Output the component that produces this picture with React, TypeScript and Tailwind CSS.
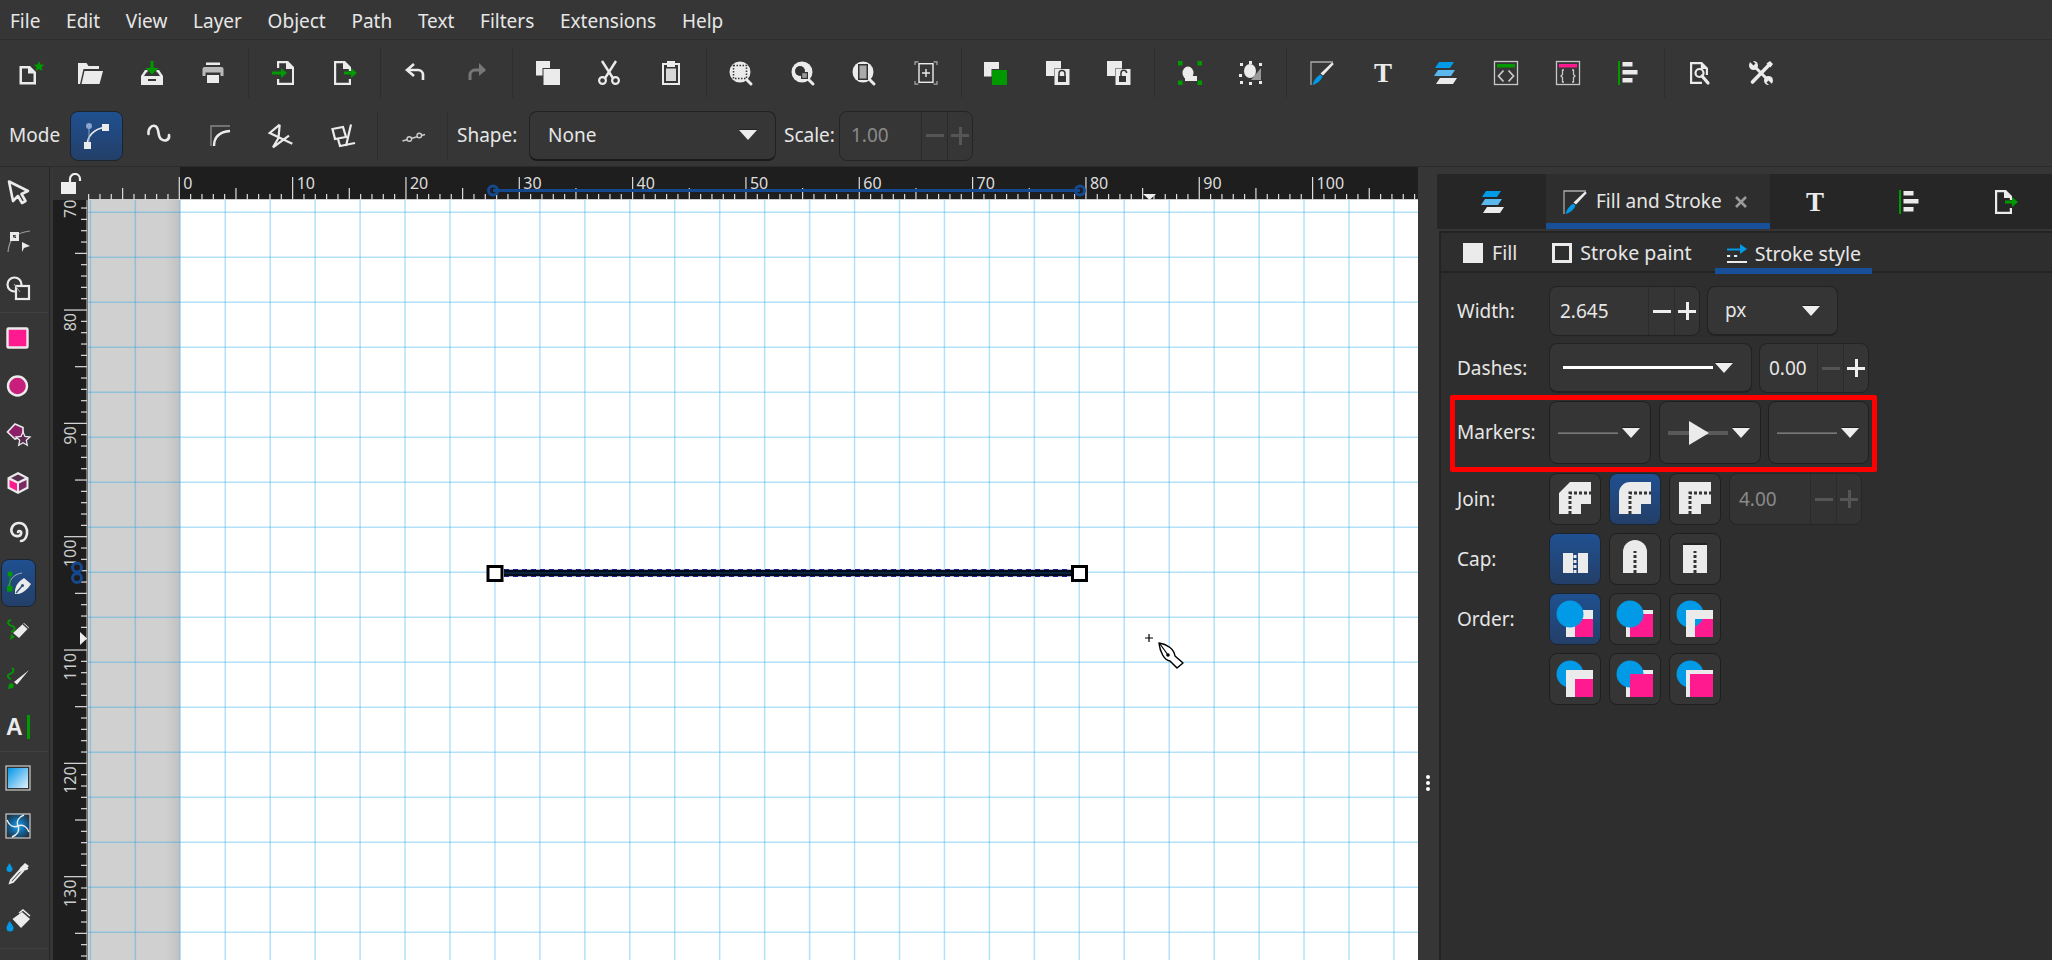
import type { ReactNode } from "react";

const G = "#ebebeb";
const GREEN = "#009a00";
const PINK = "#ff1a90";
const BLUE = "#009ae6";

function Ico({ children }: { children: ReactNode }) {
  return (
    <svg width="24" height="24" viewBox="0 0 24 24" className="overflow-visible shrink-0">
      {children}
    </svg>
  );
}

// Top toolbar icons
const iconNew = (
  <Ico>
    <path fill={G} fillRule="evenodd" d="M2.5 5h10.5l6 6v12.5H2.5zM5 7.5v13.5h11.5v-8.500h-5.500V7.500z" />
    <path fill={GREEN} d="M22 0l1.600 3.400 3.700.4-2.700 2.500.8 3.700-3.400-1.900-3.300 1.900.8-3.700-2.700-2.500 3.700-.4z" />
  </Ico>
);
const iconOpen = (
  <Ico>
    <path fill={G} d="M0 2h8.500l2 3H21v3H5.500L2 23H0z" />
    <path fill={G} d="M6.500 10H25l-3.500 13H3.500z" />
  </Ico>
);
const iconSave = (
  <Ico>
    <path fill={GREEN} d="M10.500 0h3v7h5l-6.500 6.500L5.500 7h5z" />
    <path fill={G} d="M1 24v-9l4-6h2.500v2.200H6.500L4 15h16l-2.500-3.800h-1V9H19l4 6v9zM8 18v2h8v-2z" fillRule="evenodd" />
  </Ico>
);
const iconPrint = (
  <Ico>
    <path fill={G} d="M5 1.500h14v2.500H5zM6 14h12v8H6z" />
    <path fill="#b9b9b9" d="M3.500 6h17A2 2 0 0 1 22.500 8v7h-3v-3.500h-15V15h-3V8a2 2 0 0 1 2-2z" />
  </Ico>
);
const iconImport = (
  <Ico>
    <path fill={G} fillRule="evenodd" d="M5 7V0h11l6 6v18H5v-6h2.200v3.800H20V8h-6V2.200H7.200V7z" />
    <path fill={GREEN} d="M0 10.500h9V7l6 5-6 5v-3.500H0z" />
  </Ico>
);
const iconExport = (
  <Ico>
    <path fill={G} fillRule="evenodd" d="M1 0h11l6 6v4h-2.200V8H10V2.200H3.200v19.600h12.600V18H18v6H1z" />
    <path fill={GREEN} d="M11 10.500h7V7l6 5-6 5v-3.500h-7z" />
  </Ico>
);
const iconUndo = (
  <Ico>
    <path d="M4 9h10a5 5 0 0 1 5 5v5" fill="none" stroke={G} strokeWidth="2.600" />
    <path d="M10 3L3 9l7 6" fill="none" stroke={G} strokeWidth="2.600" />
  </Ico>
);
const iconRedo = (
  <Ico>
    <path d="M20 9H10a5 5 0 0 0-5 5v5" fill="none" stroke="#777" strokeWidth="3" />
    <path d="M14 2l7 7-7 6z" fill="#777" />
  </Ico>
);
const iconDup = (
  <Ico>
    <path fill={G} d="M0 0h14v7H6.500v7.500H0z" />
    <path fill={G} d="M7.500 8H24v16H7.500z" />
  </Ico>
);
const iconCut = (
  <Ico>
    <path d="M5 0l11.500 18M19 0L7.500 18" fill="none" stroke={G} strokeWidth="2.400" />
    <circle cx="5.500" cy="19.500" r="3.400" fill="none" stroke={G} strokeWidth="2.200" />
    <circle cx="18.500" cy="19.500" r="3.400" fill="none" stroke={G} strokeWidth="2.200" />
  </Ico>
);
const iconPaste = (
  <Ico>
    <path fill={G} fillRule="evenodd" d="M3 2h5V0h8v2h5v22H3zM5 4v18h14V4h-3v2H8V4z" />
    <path fill="#d8d8d8" d="M7 7.500h10V20H7z" />
  </Ico>
);
function Magnifier({ children }: { children: ReactNode }) {
  return (
    <Ico>
      <path d="M17 18l5 5" stroke={G} strokeWidth="3" strokeLinecap="round" />
      <circle cx="11" cy="11" r="10.500" fill={G} />
      {children}
    </Ico>
  );
}
const iconZoomSel = (
  <Magnifier>
    <rect x="4.500" y="4.500" width="13" height="13" fill="none" stroke="#333" strokeWidth="1.500" strokeDasharray="1.500 1.500" />
  </Magnifier>
);
const iconZoomDraw = (
  <Magnifier>
    <circle cx="9" cy="10" r="5" fill="#333" />
    <rect x="10" y="11" width="7" height="7" fill="#333" />
    <rect x="11.200" y="12.200" width="4.600" height="4.600" fill="#999" />
  </Magnifier>
);
const iconZoomPage = (
  <Magnifier>
    <rect x="6" y="3" width="10" height="16" fill="#333" />
    <rect x="7.500" y="4.500" width="7" height="13" fill="#aaa" />
  </Magnifier>
);
const iconZoomCenter = (
  <Ico>
    <path d="M1 4V.8h3.500M23 4V.8h-3.500M1 20v3.200h3.500M23 20v3.200h-3.500" fill="none" stroke="#aaa" strokeWidth="1.200" />
    <rect x="5" y="2.700" width="14" height="18.600" fill="none" stroke={G} strokeWidth="1.400" />
    <path d="M12 8v8M8 12h8" stroke={G} strokeWidth="1.400" />
  </Ico>
);
const iconGroup = (
  <Ico>
    <path fill={G} d="M0 1h15v7H7.500v7.500H0z" />
    <rect x="8" y="9" width="15" height="15" fill={GREEN} />
  </Ico>
);
const iconLock = (
  <Ico>
    <path fill={G} d="M0 0h15v7.500H8V15H0z" />
    <rect x="8.500" y="8" width="15" height="16" fill={G} />
    <path d="M13 15v-2.500a3 3 0 0 1 6 0V15" fill="none" stroke="#333" strokeWidth="1.500" />
    <rect x="12" y="15" width="8" height="6" fill="#333" />
  </Ico>
);
const iconUnlock = (
  <Ico>
    <path fill={G} d="M0 0h15v7.500H8V15H0z" />
    <rect x="8.500" y="8" width="15" height="16" fill={G} />
    <path d="M14 15v-3a2.800 2.800 0 0 1 5.600 0" fill="none" stroke="#333" strokeWidth="1.500" />
    <rect x="12" y="15" width="7" height="6" fill="#333" />
  </Ico>
);
const iconSelGroup = (
  <Ico>
    <path fill={GREEN} d="M0 0h4.500v4.500H0zM19.500 0H24v4.500h-4.500zM0 19.500h4.500V24H0zM19.500 19.500H24V24h-4.500z" />
    <path fill={G} d="M11 15h8v5H7v-4z" />
    <ellipse cx="10" cy="12" rx="5.500" ry="6.500" fill={G} />
  </Ico>
);
const iconSelUngroup = (
  <Ico>
    <path fill={G} d="M1 2h3v3H1zM10 0h3v3h-3zM20 2h3v3h-3zM0 13h3v3H0zM1 20h3v3H1zM10 21h3v3h-3zM20 20h3v3h-3z" />
    <path fill="#999" d="M22 7v12H12z" />
    <ellipse cx="11" cy="10" rx="6" ry="7" fill={G} />
  </Ico>
);
const iconFillStroke = (
  <Ico>
    <path d="M1 24V1h22" fill="none" stroke="#aaa" strokeWidth="1.300" />
    <path d="M22 1.500L23.800 3 13 14.500l-2.500-2z" fill={G} />
    <path d="M10 13.500l2.500 2.200C10.500 20 6.500 23 2.500 24 3.500 20 6 16 10 13.500z" fill={BLUE} />
  </Ico>
);
const iconT = (
  <svg width="24" height="24" viewBox="0 0 24 24" className="shrink-0 overflow-visible">
    <text x="12" y="21" textAnchor="middle" fontFamily="'Liberation Serif', serif" fontWeight="700" fontSize="27" fill={G}>
      T
    </text>
  </svg>
);
const iconLayers = (
  <Ico>
    <path fill={BLUE} d="M6 1h15l-4 6H2z" />
    <path fill="#5ab8ec" d="M5 9h17l-4 6H1z" />
    <path fill={G} d="M7 17h17l-4 6H3z" />
  </Ico>
);
const iconXml = (
  <Ico>
    <rect x=".5" y=".5" width="23" height="23" fill="none" stroke="#c8c8c8" strokeWidth="1.300" />
    <rect x="3" y="3" width="18" height="3.500" fill={GREEN} />
    <path d="M9.500 9.500L4.500 15l5 5.500M14.500 9.500l5 5.500-5 5.500" fill="none" stroke="#c8c8c8" strokeWidth="1.800" />
  </Ico>
);
const iconCss = (
  <Ico>
    <rect x=".5" y=".5" width="23" height="23" fill="none" stroke="#c8c8c8" strokeWidth="1.300" />
    <rect x="3" y="3" width="18" height="3.500" fill={PINK} />
    <path d="M8 9H6.500v4.500L5 15l1.500 1.500V21H8M16 9h1.500v4.500L19 15l-1.500 1.500V21H16" fill="none" stroke="#c8c8c8" strokeWidth="1.300" />
  </Ico>
);
const iconAlign = (
  <Ico>
    <rect x="1" y="0" width="2" height="24" fill={GREEN} />
    <path fill={G} d="M5.500 1h10v4.500h-10zM5.500 9h15v4.500h-15zM5.500 17h10v4.500h-10z" />
  </Ico>
);
const iconFind = (
  <Ico>
    <path fill={G} fillRule="evenodd" d="M2 1h12l6 6v7h-2.200V8h-5V3.200H4.200v17.600H14V23H2z" />
    <circle cx="11.500" cy="12" r="4" fill="none" stroke={G} strokeWidth="2.200" />
    <path d="M14 15l6 7" stroke={G} strokeWidth="3.200" strokeLinecap="round" />
  </Ico>
);
const iconTools = (
  <Ico>
    <path d="M20 4L3.500 21" stroke={G} strokeWidth="3.600" strokeLinecap="round" />
    <path d="M17.500 2.500L21 0l3 3-2.500 3.500z" fill={G} />
    <path d="M5 5l14 14" stroke={G} strokeWidth="3" />
    <circle cx="4.500" cy="4.500" r="4.500" fill={G} />
    <circle cx="19.500" cy="19.500" r="4.500" fill={G} />
    <path d="M0 0l4.500 4.500 2-2L3 -1zM24 24l-4.500-4.500-2 2 3.500 3.500z" fill="#363636" />
  </Ico>
);

// Mode icons
const modeCusp = (
  <Ico>
    <path d="M2 23C2 12 9 5 21 3" fill="none" stroke={G} strokeWidth="1.700" />
    <rect x="-1" y="18" width="7" height="7" fill={G} />
    <rect x="17" y="0" width="7" height="7" fill={G} />
    <circle cx="4" cy="2" r="3" fill="#8aa6cc" />
    <path d="M4 2v16" stroke="#8aa6cc" strokeWidth="1" />
  </Ico>
);
const modeSpiro = (
  <Ico>
    <path d="M1.500 10C1 4 5 1 8 2c5 1.500 2 10 6 13 4 3 9 1 8-4" fill="none" stroke={G} strokeWidth="2.600" strokeLinecap="round" />
  </Ico>
);
const modeBspline = (
  <Ico>
    <path d="M3 22V2h19" fill="none" stroke="#888" strokeWidth="1.400" />
    <path d="M6 22C6 13 11 8 22 7" fill="none" stroke={G} strokeWidth="2.400" />
  </Ico>
);
const modeZig = (
  <Ico>
    <path d="M10.700.7L.7 9l22.600 10.700M10.700.7L9.500 14 4 23.300l16-11.600" fill="none" stroke={G} strokeWidth="2.200" />
  </Ico>
);
const modePara = (
  <Ico>
    <path d="M1.500 5L12 3l3 10-11 2zM20 .5L15 22M7 15l2 7 15-3" fill="none" stroke={G} strokeWidth="2.200" />
  </Ico>
);
const modeShape = (
  <Ico>
    <path d="M1.500 17L24 10.500" stroke="#ccc" strokeWidth="1.600" />
    <circle cx="8.300" cy="15" r="2.300" fill="#363636" stroke="#ccc" strokeWidth="1.400" />
    <circle cx="18.300" cy="11.500" r="2.300" fill="#363636" stroke="#ccc" strokeWidth="1.400" />
  </Ico>
);

// Toolbox icons
const toolSelect = (
  <Ico>
    <path d="M3 1.500L22 11l-6.500 3 4 7-3.500 2-4-7-5 5z" fill="none" stroke={G} strokeWidth="2.600" strokeLinejoin="round" />
  </Ico>
);
const toolNode = (
  <Ico>
    <path d="M2 24C3 12 8 5 24 3" fill="none" stroke="#999" strokeWidth="1.200" />
    <path fill={G} fillRule="evenodd" d="M4 4h9v9H4zM7 7v3h3V7z" />
    <path fill={G} d="M16 14l8 4-6 2-2 4z" />
  </Ico>
);
const toolShapes = (
  <Ico>
    <circle cx="8.500" cy="8.500" r="7" fill="none" stroke={G} strokeWidth="2.200" />
    <rect x="10" y="10" width="13" height="13" fill="#333" stroke={G} strokeWidth="2.200" />
    <path d="M8 8l6 8" stroke="#aaa" strokeWidth="1" />
  </Ico>
);
const toolRect = (
  <Ico>
    <rect x="1.500" y="1.500" width="20" height="19" rx="1" fill={PINK} stroke={G} strokeWidth="2.400" />
  </Ico>
);
const toolCircle = (
  <Ico>
    <circle cx="11.500" cy="11" r="9.500" fill="#c81e7c" stroke={G} strokeWidth="2.400" />
  </Ico>
);
const toolStar = (
  <Ico>
    <path d="M9 1l8 3.500v8.500l-8 3-7.500-7z" fill="#8c1f68" stroke={G} strokeWidth="1.600" />
    <path d="M17 9l2 4.500 5 .5-3.700 3.300 1 5-4.300-2.600-4.300 2.600 1-5L10 14l5-.5z" fill="#5a2850" stroke={G} strokeWidth="1.300" />
  </Ico>
);
const toolBox = (
  <Ico>
    <path d="M12 1L1.500 6.500v11L12 23l10.500-5.500v-11z" fill={G} />
    <path d="M12 3.500L5 7l7 3.500L19 7z" fill="#5a3050" />
    <path d="M3.500 9l7.500 3.500v7.500L3.500 16z" fill={PINK} />
    <path d="M20.500 9L13 12.500v7.500l7.500-4z" fill="#7d2a63" />
  </Ico>
);
const toolSpiral = (
  <Ico>
    <path d="M12 13c1-2 4-1 3 2s-7 3-9-1 1-10 7-10 9 6 8 11-4 7-6 7" fill="none" stroke={G} strokeWidth="2.600" strokeLinecap="round" />
  </Ico>
);
const toolPen = (
  <Ico>
    <path d="M2 15C3 7 8 3 15 2" fill="none" stroke="#aab" strokeWidth="1" />
    <circle cx="3" cy="3" r="2.500" fill={GREEN} />
    <path d="M3 3v13" stroke={GREEN} strokeWidth="1.200" />
    <rect x="0" y="15" width="5.500" height="5.500" fill={GREEN} />
    <path d="M8 23c-.5-5 1-9 5-13l4-3 7 6-3 4c-4 4-8 6.500-13 6z" fill={G} />
    <path d="M9 22l6-7" stroke="#2a4a78" strokeWidth="1.300" />
    <circle cx="15.500" cy="14.500" r="1.500" fill="#2a4a78" />
  </Ico>
);
const toolPencil = (
  <Ico>
    <path d="M5 1C0 2 2 6 6 7s3 5-1 6" fill="none" stroke={GREEN} strokeWidth="1.800" />
    <path d="M4 21l1-6 4 3z" fill={GREEN} />
    <path d="M7 14L18 4l5 4.500L13 19z" fill={G} />
    <path d="M17 5l5 4.500" stroke="#333" strokeWidth="1.300" />
  </Ico>
);
const toolCalli = (
  <Ico>
    <path d="M6 1c3 2 1 5-2 6s-3 4 1 5" fill="none" stroke={GREEN} strokeWidth="1.800" />
    <path d="M2 22l1-5 3-1 2 2-1 3z" fill={GREEN} />
    <path d="M8 15l3 2.500L23 3z" fill={G} />
  </Ico>
);
const toolText = (
  <svg width="24" height="24" viewBox="0 0 24 24" className="shrink-0 overflow-visible">
    <text x="0" y="20" fontFamily="'Liberation Sans', sans-serif" fontWeight="700" fontSize="23" fill={G}>
      A
    </text>
    <rect x="21" y="0" width="3" height="24" fill={GREEN} />
  </svg>
);
const toolGradient = (
  <Ico>
    <defs>
      <linearGradient id="toolgrad" x1="0" y1="0" x2="1" y2="1">
        <stop offset="0" stopColor="#0095e8" />
        <stop offset="1" stopColor="#e4f2fb" />
      </linearGradient>
    </defs>
    <rect x="0" y="0" width="24" height="24" fill="#333" stroke="#ccc" strokeWidth="1.200" />
    <rect x="2" y="2" width="20" height="20" fill="url(#toolgrad)" />
  </Ico>
);
const toolMesh = (
  <Ico>
    <defs>
      <radialGradient id="toolmesh" r="0.6">
        <stop offset="0" stopColor="#18a6f5" />
        <stop offset="0.6" stopColor="#14598c" />
        <stop offset="1" stopColor="#2a2f35" />
      </radialGradient>
    </defs>
    <rect x="0" y="0" width="24" height="24" fill="url(#toolmesh)" stroke="#ccc" strokeWidth="1.200" />
    <path d="M12 12C10 7 13 3 18 1M12 12c5-2 9 1 11 6M12 12c2 5-1 9-6 11M12 12C7 14 3 11 1 6" fill="none" stroke={G} strokeWidth="1.500" />
  </Ico>
);
const toolDropper = (
  <Ico>
    <path d="M3.500 1C2 4 .5 5.500.5 7a3 3 0 0 0 6 0C6.500 5.500 5 4 3.500 1z" fill={BLUE} />
    <path d="M15 7l-10 11-1 3 3-1 10-11z" fill="none" stroke={G} strokeWidth="2" />
    <path d="M14 6l4-4 1-1 4 3-1.500 1.500 1 1.500-2 1-7 2z" fill={G} />
  </Ico>
);
const toolBucket = (
  <Ico>
    <path d="M3.500 11C2 14 .5 16 .5 18a3.500 3.500 0 0 0 7 0c0-2-2-4-4-7z" fill={BLUE} />
    <path d="M6.500 9l9.500-7 8 7-9 9z" fill={G} />
    <path d="M13 3l4-3 7 6" fill="none" stroke={G} strokeWidth="1.500" />
  </Ico>
);

function ToolBtn({ children }: { children: ReactNode }) {
  return <div className="w-[61.5px] h-full flex items-center justify-center shrink-0">{children}</div>;
}

function VSep() {
  return <div className="w-px h-[50px] bg-[#2e2e2e] mx-[4px] shrink-0" />;
}

function Arrow() {
  return (
    <svg width="18" height="12" viewBox="0 0 18 12" className="shrink-0">
      <path d="M0 1h18L9 11z" fill="#eee" />
      <path d="M0 0h18v1H0z" fill="#222" />
    </svg>
  );
}

function MinusPlus({ dimMinus, dimPlus }: { dimMinus?: boolean; dimPlus?: boolean }) {
  return (
    <>
      <div className="w-[26px] border-l border-[#2b2b2b] flex items-center justify-center">
        <div className={dimMinus ? "w-[18px] h-[3px] bg-[#555]" : "w-[18px] h-[3px] bg-[#eee]"} />
      </div>
      <div className="w-[25px] border-l border-[#2b2b2b] flex items-center justify-center relative">
        <div className={dimPlus ? "w-[18px] h-[3px] bg-[#555]" : "w-[18px] h-[3px] bg-[#eee]"} />
        <div className={dimPlus ? "absolute w-[3px] h-[18px] bg-[#555]" : "absolute w-[3px] h-[18px] bg-[#eee]"} />
      </div>
    </>
  );
}

function MenuBar() {
  const items = ["File", "Edit", "View", "Layer", "Object", "Path", "Text", "Filters", "Extensions", "Help"];
  return (
    <div className="h-[40px] flex items-center gap-[25.7px] pl-[10px] border-b border-[#2e2e2e] pt-[4px]">
      {items.map((m) => (
        <span key={m}>{m}</span>
      ))}
    </div>
  );
}

function MainToolbar() {
  const groups = [
    [iconNew, iconOpen, iconSave, iconPrint],
    [iconImport, iconExport],
    [iconUndo, iconRedo],
    [iconDup, iconCut, iconPaste],
    [iconZoomSel, iconZoomDraw, iconZoomPage, iconZoomCenter],
    [iconGroup, iconLock, iconUnlock],
    [iconSelGroup, iconSelUngroup],
    [iconFillStroke, iconT, iconLayers, iconXml, iconCss, iconAlign],
    [iconFind, iconTools],
  ];
  return (
    <div className="h-[65px] flex items-center -ml-[2px]">
      {groups.map((g, i) => (
        <div key={i} className="flex items-center h-full">
          {i > 0 && (
            <div className="flex items-center h-full">
              <VSep />
            </div>
          )}
          {g.map((ic, j) => (
            <ToolBtn key={j}>{ic}</ToolBtn>
          ))}
        </div>
      ))}
    </div>
  );
}

function ModeToolbar() {
  return (
    <div className="h-[61px] flex items-center pl-[9px]">
      <span className="w-[61px]">Mode</span>
      <div className="w-[53px] h-[50px] rounded-[8px] border border-[#1c2430] bg-gradient-to-b from-[#1f5090] to-[#233f68] flex items-center justify-center">
        {modeCusp}
      </div>
      <div className="w-[61px] flex justify-center ml-[5px]">{modeSpiro}</div>
      <div className="w-[61px] flex justify-center">{modeBspline}</div>
      <div className="w-[62px] flex justify-center">{modeZig}</div>
      <div className="w-[61px] flex justify-center">{modePara}</div>
      <div className="w-px h-[50px] bg-[#2e2e2e] ml-[4px]" />
      <div className="w-[69px] flex justify-center">{modeShape}</div>
      <div className="w-px h-[50px] bg-[#2e2e2e]" />
      <span className="ml-[9px] w-[72px]">Shape:</span>
      <div className="w-[247px] h-[50px] rounded-[8px] border border-[#222] border-b-2 border-b-[#1a1a1a] bg-[#363636] flex items-center justify-between pl-[18px] pr-[18px]">
        <span>None</span>
        <Arrow />
      </div>
      <span className="ml-[8px] w-[55px]">Scale:</span>
      <div className="w-[134px] h-[50px] rounded-[8px] border border-[#242424] bg-[#363636] flex">
        <span className="flex-1 pl-[11px] text-[#8a8a8a] self-center">1.00</span>
        <MinusPlus dimMinus dimPlus />
      </div>
    </div>
  );
}

function LeftToolbox() {
  const Btn = ({ children }: { children: ReactNode }) => (
    <div className="w-[35px] h-[48px] flex items-center justify-center shrink-0">{children}</div>
  );
  return (
    <div className="w-[50px] shrink-0 border-r border-[#252525] flex flex-col pt-[1px]">
      <Btn>{toolSelect}</Btn>
      <Btn>{toolNode}</Btn>
      <Btn>{toolShapes}</Btn>
      <div className="h-px bg-[#3f3f3f] w-[48px] mb-[2px]" />
      <Btn>{toolRect}</Btn>
      <Btn>{toolCircle}</Btn>
      <Btn>{toolStar}</Btn>
      <Btn>{toolBox}</Btn>
      <Btn>{toolSpiral}</Btn>
      <div className="w-[35px] h-[48px] mt-[4px] ml-px rounded-[8px] border border-[#1c2430] bg-gradient-to-b from-[#1f5090] to-[#233f68] flex items-center justify-center shrink-0">
        {toolPen}
      </div>
      <Btn>{toolPencil}</Btn>
      <Btn>{toolCalli}</Btn>
      <Btn>{toolText}</Btn>
      <div className="h-px bg-[#3f3f3f] w-[48px] mb-[2px]" />
      <Btn>{toolGradient}</Btn>
      <Btn>{toolMesh}</Btn>
      <Btn>{toolDropper}</Btn>
      <Btn>{toolBucket}</Btn>
      <div className="h-px bg-[#3f3f3f] w-[48px] mt-[2px]" />
    </div>
  );
}

function TopRuler() {
  const ticks = [];
  const labels = [];
  for (let i = -8; i <= 109; i++) {
    const x = 91.3 + i * 11.333;
    const major = i % 10 === 0;
    const mid = i % 5 === 0;
    const y1 = major ? 10 : mid ? 21 : 27;
    ticks.push(<line key={i} x1={x} x2={x} y1={y1} y2={33} stroke="#ddd" strokeWidth="1.200" />);
    if (major && i >= 0) {
      labels.push(
        <text key={i} x={x + 4} y="22" fontSize="16" fill="#ddd" fontFamily="'Noto Sans', sans-serif">
          {i}
        </text>
      );
    }
  }
  return (
    <svg width="1330" height="33" className="block shrink-0">
      <rect width="1330" height="33" fill="#1e1e1e" />
      <rect width="92" height="33" fill="#353535" />
      <rect y="32" width="1330" height="1" fill="#ccc" />
      {ticks}
      {labels}
      <line x1="405" x2="992" y1="23.500" y2="23.500" stroke="#14498f" strokeWidth="3" />
      <circle cx="405" cy="23.500" r="4.500" fill="none" stroke="#14498f" strokeWidth="3" />
      <circle cx="992" cy="23.500" r="4.500" fill="none" stroke="#14498f" strokeWidth="3" />
      <path d="M1055 27h13l-6.500 6z" fill="#eee" />
    </svg>
  );
}

function LeftRuler() {
  const ticks = [];
  const labels = [];
  for (let i = 1; i <= 68; i++) {
    const y = -3.3 + i * 11.333;
    const major = i % 10 === 0;
    const mid = i % 5 === 0;
    const x1 = major ? 10 : mid ? 21 : 27;
    ticks.push(<line key={i} x1={x1} x2={33} y1={y} y2={y} stroke="#ddd" strokeWidth="1.200" />);
  }
  for (let v = 70; v <= 130; v += 10) {
    const y = -3.3 + (v - 70) * 11.333 + 3;
    labels.push(
      <text
        key={v}
        transform={`translate(22 ${y}) rotate(-90)`}
        textAnchor="end"
        fontSize="16"
        fill="#ccc"
        fontFamily="'Noto Sans', sans-serif"
      >
        {v}
      </text>
    );
  }
  return (
    <svg width="34" height="760" className="block shrink-0">
      <rect width="34" height="760" fill="#1e1e1e" />
      <rect x="32.500" width="1" height="760" fill="#ccc" />
      {ticks}
      {labels}
      <circle cx="23" cy="367.500" r="4.500" fill="none" stroke="#14498f" strokeWidth="3" />
      <circle cx="23" cy="378" r="4.500" fill="none" stroke="#14498f" strokeWidth="3" />
      <path d="M26 432l7 6.500-7 6.500z" fill="#eee" />
    </svg>
  );
}

function CanvasDrawing() {
  const v = [];
  const h = [];
  for (let k = -2; k <= 27; k++) {
    const x = 92.3 + k * 44.95;
    v.push(<line key={k} x1={x} x2={x} y1="0" y2="760" stroke="#009ff0" strokeOpacity="0.3" strokeWidth="1.500" />);
  }
  for (let k = 0; k <= 16; k++) {
    const y = 12.3 + k * 45;
    h.push(<line key={k} x1="0" x2="1330" y1={y} y2={y} stroke="#009ff0" strokeOpacity="0.3" strokeWidth="1.500" />);
  }
  return (
    <svg width="1330" height="760" className="absolute inset-0">
      {v}
      {h}
      <line x1="416" x2="983" y1="373" y2="373" stroke="#b9b9c4" strokeWidth="8" />
      <line x1="416" x2="983" y1="373" y2="373" stroke="#1c1c8c" strokeWidth="8" strokeDasharray="5 4" />
      <line x1="416" x2="983" y1="373" y2="373" stroke="#020b1e" strokeWidth="6" />
      <line x1="416" x2="983" y1="373" y2="373" stroke="#0d3d5a" strokeWidth="1" />
      <rect x="400" y="366.500" width="14" height="14" fill="#fff" stroke="#000" strokeWidth="3" />
      <rect x="984.500" y="366.500" width="14" height="14" fill="#fff" stroke="#000" strokeWidth="3" />
      <path d="M1061 434v8M1057 438h8" stroke="#000" strokeWidth="1.200" />
      <path
        d="M1071 443c8 1 15 6 16 13l8 7-6 5-7-7c-6-1-10-9-11-18z"
        fill="#fff"
        stroke="#000"
        strokeWidth="1.500"
        strokeLinejoin="round"
      />
      <path d="M1072 444l8 11" stroke="#000" strokeWidth="1.200" />
      <circle cx="1080" cy="455" r="1.800" fill="#000" />
    </svg>
  );
}

function CanvasArea() {
  return (
    <div className="w-[1365px] shrink-0 flex flex-col">
      <div className="flex h-[33px] shrink-0">
        <div className="w-[35px] bg-[#353535] flex items-center justify-center">
          <svg width="22" height="22" viewBox="0 0 22 22">
            <path d="M10 10V6a5 5 0 0 1 10 0v2" fill="none" stroke="#eee" strokeWidth="2.200" />
            <rect x="1" y="9" width="15" height="12" fill="#eee" />
          </svg>
        </div>
        <TopRuler />
      </div>
      <div className="flex flex-1 min-h-0">
        <div className="w-[35px] flex justify-start pl-px bg-[#1e1e1e]">
          <LeftRuler />
        </div>
        <div className="relative flex-1 flex overflow-hidden bg-white">
          <div className="w-[92px] bg-gradient-to-r from-[#d0d0d0] from-[85%] to-[#c0c0c0]" />
          <CanvasDrawing />
        </div>
      </div>
    </div>
  );
}

function TabIcon({ w, children }: { w: string; children: ReactNode }) {
  return <div className={`${w} flex items-center justify-center`}>{children}</div>;
}

function Square52({ active, children }: { active?: boolean; children: ReactNode }) {
  return (
    <div
      className={
        active
          ? "w-[52px] h-[52px] rounded-[8px] border border-[#1c2430] bg-gradient-to-b from-[#1f5090] to-[#233f68]"
          : "w-[52px] h-[52px] rounded-[8px] border border-[#1f1f1f] bg-[#353535]"
      }
    >
      {children}
    </div>
  );
}

function Svg52({ children }: { children: ReactNode }) {
  return (
    <svg width="50" height="50" viewBox="1 1 50 50" className="block">
      {children}
    </svg>
  );
}

function JoinIcon({ d }: { d: string }) {
  return (
    <Svg52>
      <path d={d} fill={G} />
      <path d="M21 41V20h21" fill="none" stroke="#333" strokeWidth="3" strokeDasharray="3 2" />
    </Svg52>
  );
}

function CapDots({ color }: { color: string }) {
  return <path d="M26 40V18" fill="none" stroke={color} strokeWidth="3" strokeDasharray="3 2" />;
}

function OrderIcon({ n }: { n: number }) {
  const circle = <circle cx="21" cy="21" r="13.500" fill={BLUE} />;
  const white = <rect x="17" y="17" width="27" height="27" fill={G} />;
  const pinkSmall = <rect x="26" y="26" width="18" height="18" fill={PINK} />;
  const pinkLarge = <rect x="21" y="21" width="23" height="23" fill={PINK} />;
  const whiteL = <path d="M17 17h27v9H26v18h-9z" fill={G} />;
  return (
    <Svg52>
      {n === 1 && (
        <>
          {white}
          {pinkSmall}
          {circle}
        </>
      )}
      {n === 2 && (
        <>
          {white}
          {pinkLarge}
          {circle}
        </>
      )}
      {n === 3 && (
        <>
          {pinkSmall}
          {circle}
          {whiteL}
        </>
      )}
      {n === 4 && (
        <>
          {circle}
          {white}
          {pinkSmall}
        </>
      )}
      {n === 5 && (
        <>
          {white}
          {circle}
          {pinkLarge}
        </>
      )}
      {n === 6 && (
        <>
          {circle}
          {white}
          {pinkLarge}
        </>
      )}
    </Svg52>
  );
}

function MarkerBtn({ w, thick, ml }: { w: string; thick?: boolean; ml: string }) {
  return (
    <div className={`${w} ${ml} h-[63px] rounded-[8px] border border-[#1f1f1f] bg-[#353535] flex items-center pl-[8px] gap-[4px]`}>
      <svg width="60" height="26" viewBox="0 0 60 26" className="shrink-0">
        {thick ? (
          <>
            <rect x="0" y="11" width="60" height="4" fill="#5a5a5a" />
            <path d="M21 1l20 12-20 12z" fill={G} />
          </>
        ) : (
          <rect x="0" y="12.500" width="60" height="1.300" fill="#8a8a8a" />
        )}
      </svg>
      <Arrow />
    </div>
  );
}

function PanelRow({ label, mt, h, children }: { label: string; mt: string; h: string; children: ReactNode }) {
  return (
    <div className={`flex ${mt} ${h}`}>
      <span className="w-[108px] pl-[16px] self-center shrink-0">{label}</span>
      {children}
    </div>
  );
}

function RightPanel() {
  return (
    <div className="w-[615px] shrink-0 flex flex-col pt-[7px]">
      <div className="h-[55px] flex bg-[#262626] shrink-0">
        <TabIcon w="w-[109px]">{iconLayers}</TabIcon>
        <div className="w-[224px] bg-[#2e2e2e] border-b-[6px] border-[#184f99] flex items-center pl-[17px] pt-[6px]">
          {iconFillStroke}
          <span className="ml-[9px]">Fill and Stroke</span>
          <svg width="14" height="14" viewBox="0 0 14 14" className="ml-[12px]">
            <path d="M2 2l10 10M12 2L2 12" stroke="#9a9a9a" strokeWidth="2.600" />
          </svg>
        </div>
        <TabIcon w="w-[90px]">{iconT}</TabIcon>
        <TabIcon w="w-[100px]">{iconAlign}</TabIcon>
        <TabIcon w="w-[92px]">{iconExport}</TabIcon>
      </div>
      <div className="flex-1 mt-[2px] ml-[2px] border-l-2 border-t-2 border-[#232323] bg-[#2e2e2e] flex flex-col">
        <div className="h-[40px] shrink-0 flex pl-[10px] gap-[11px] border-b-2 border-[#232323] text-[19.6px]">
          <div className="flex items-center gap-[9px] pl-[12px] pr-[12px] pt-[2px]">
            <div className="w-[20px] h-[20px] bg-[#ebebeb]" />
            <span>Fill</span>
          </div>
          <div className="flex items-center gap-[8px] pl-[12px] pr-[12px] pt-[2px]">
            <div className="w-[20px] h-[20px] border-[3px] border-[#ebebeb]" />
            <span>Stroke paint</span>
          </div>
          <div className="flex items-center gap-[8px] pl-[12px] pr-[11px] pt-[6px] border-b-[6px] border-[#184f99] h-[41px]">
            <svg width="20" height="20" viewBox="0 0 20 20" className="shrink-0">
              <path d="M0 5.500h14M0 12h3.500M7 12h3.500" stroke={BLUE} strokeWidth="2" />
              <path d="M13 0l7 5-7 5z" fill={BLUE} />
              <path d="M0 18h20" stroke={G} strokeWidth="2" />
              <path d="M0 12h3M7 12h3" stroke={G} strokeWidth="2" />
            </svg>
            <span>Stroke style</span>
          </div>
        </div>
        <div className="pt-[13px] flex flex-col">
          <PanelRow label="Width:" mt="mt-0" h="h-[50px]">
            <div className="w-[151px] rounded-[8px] border border-[#222] bg-[#353535] flex">
              <span className="flex-1 pl-[10px] self-center">2.645</span>
              <MinusPlus />
            </div>
            <div className="ml-[7px] w-[131px] rounded-[8px] border border-[#222] border-b-2 bg-[#353535] flex items-center justify-between pl-[17px] pr-[17px]">
              <span>px</span>
              <Arrow />
            </div>
          </PanelRow>
          <PanelRow label="Dashes:" mt="mt-[7px]" h="h-[50px]">
            <div className="w-[203px] rounded-[8px] border border-[#222] border-b-2 bg-[#353535] flex items-center pl-[13px] gap-[2px]">
              <div className="w-[150px] h-[3px] bg-white" />
              <Arrow />
            </div>
            <div className="ml-[7px] w-[110px] rounded-[8px] border border-[#222] bg-[#353535] flex">
              <span className="flex-1 pl-[9px] self-center">0.00</span>
              <MinusPlus dimMinus />
            </div>
          </PanelRow>
          <div className="relative">
            <PanelRow label="Markers:" mt="mt-[8px]" h="h-[63px]">
              <MarkerBtn w="w-[102px]" ml="ml-0" />
              <MarkerBtn w="w-[102px]" ml="ml-[8px]" thick />
              <MarkerBtn w="w-[101px]" ml="ml-[7px]" />
            </PanelRow>
            <div className="absolute left-[9px] top-[2px] w-[427px] h-[77px] border-[5px] border-[#f00] rounded-[2px] pointer-events-none" />
          </div>
          <PanelRow label="Join:" mt="mt-[9px]" h="h-[52px]">
            <div className="flex gap-[8px]">
              <Square52>
                <JoinIcon d="M10 41V20L21 9h21v22H32v10z" />
              </Square52>
              <Square52 active>
                <JoinIcon d="M10 41V20a11 11 0 0 1 11-11h21v22H32v10z" />
              </Square52>
              <Square52>
                <JoinIcon d="M10 41V9h32v22H32v10z" />
              </Square52>
              <div className="w-[133px] rounded-[8px] border border-[#262626] bg-[#333] flex">
                <span className="flex-1 pl-[9px] self-center text-[#8a8a8a]">4.00</span>
                <MinusPlus dimMinus dimPlus />
              </div>
            </div>
          </PanelRow>
          <PanelRow label="Cap:" mt="mt-[8px]" h="h-[52px]">
            <div className="flex gap-[8px]">
              <Square52 active>
                <Svg52>
                  <path d="M14 20h10v20H14zM29 20h10v20H29z" fill={G} />
                  <path d="M26 40V20" stroke={G} strokeWidth="3" strokeDasharray="3 2" />
                </Svg52>
              </Square52>
              <Square52>
                <Svg52>
                  <path d="M14 40V19a12 12 0 0 1 24 0v21z" fill={G} />
                  <CapDots color="#333" />
                </Svg52>
              </Square52>
              <Square52>
                <Svg52>
                  <path d="M14 12h24v28H14z" fill={G} />
                  <path d="M14 11h24" stroke="#111" strokeWidth="1" />
                  <CapDots color="#333" />
                </Svg52>
              </Square52>
            </div>
          </PanelRow>
          <PanelRow label="Order:" mt="mt-[8px]" h="h-[52px]">
            <div className="flex gap-[8px]">
              <Square52 active>
                <OrderIcon n={1} />
              </Square52>
              <Square52>
                <OrderIcon n={2} />
              </Square52>
              <Square52>
                <OrderIcon n={3} />
              </Square52>
            </div>
          </PanelRow>
          <div className="flex gap-[8px] mt-[8px] pl-[108px]">
            <Square52>
              <OrderIcon n={4} />
            </Square52>
            <Square52>
              <OrderIcon n={5} />
            </Square52>
            <Square52>
              <OrderIcon n={6} />
            </Square52>
          </div>
        </div>
      </div>
    </div>
  );
}

export default function App() {
  return (
    <div className="w-[2052px] h-[960px] overflow-hidden flex flex-col bg-[#363636] text-[#e6e6e6] text-[19px] font-['Noto_Sans',sans-serif]">
      <MenuBar />
      <MainToolbar />
      <ModeToolbar />
      <div className="h-[794px] flex border-t border-[#2b2b2b]">
        <LeftToolbox />
        <div className="w-[3px] shrink-0" />
        <CanvasArea />
        <div className="w-[19px] shrink-0 flex flex-col items-center justify-center gap-[2px] pt-[438px]">
          <div className="w-[4px] h-[4px] rounded-full bg-white" />
          <div className="w-[4px] h-[4px] rounded-full bg-white" />
          <div className="w-[4px] h-[4px] rounded-full bg-white" />
        </div>
        <RightPanel />
      </div>
    </div>
  );
}
